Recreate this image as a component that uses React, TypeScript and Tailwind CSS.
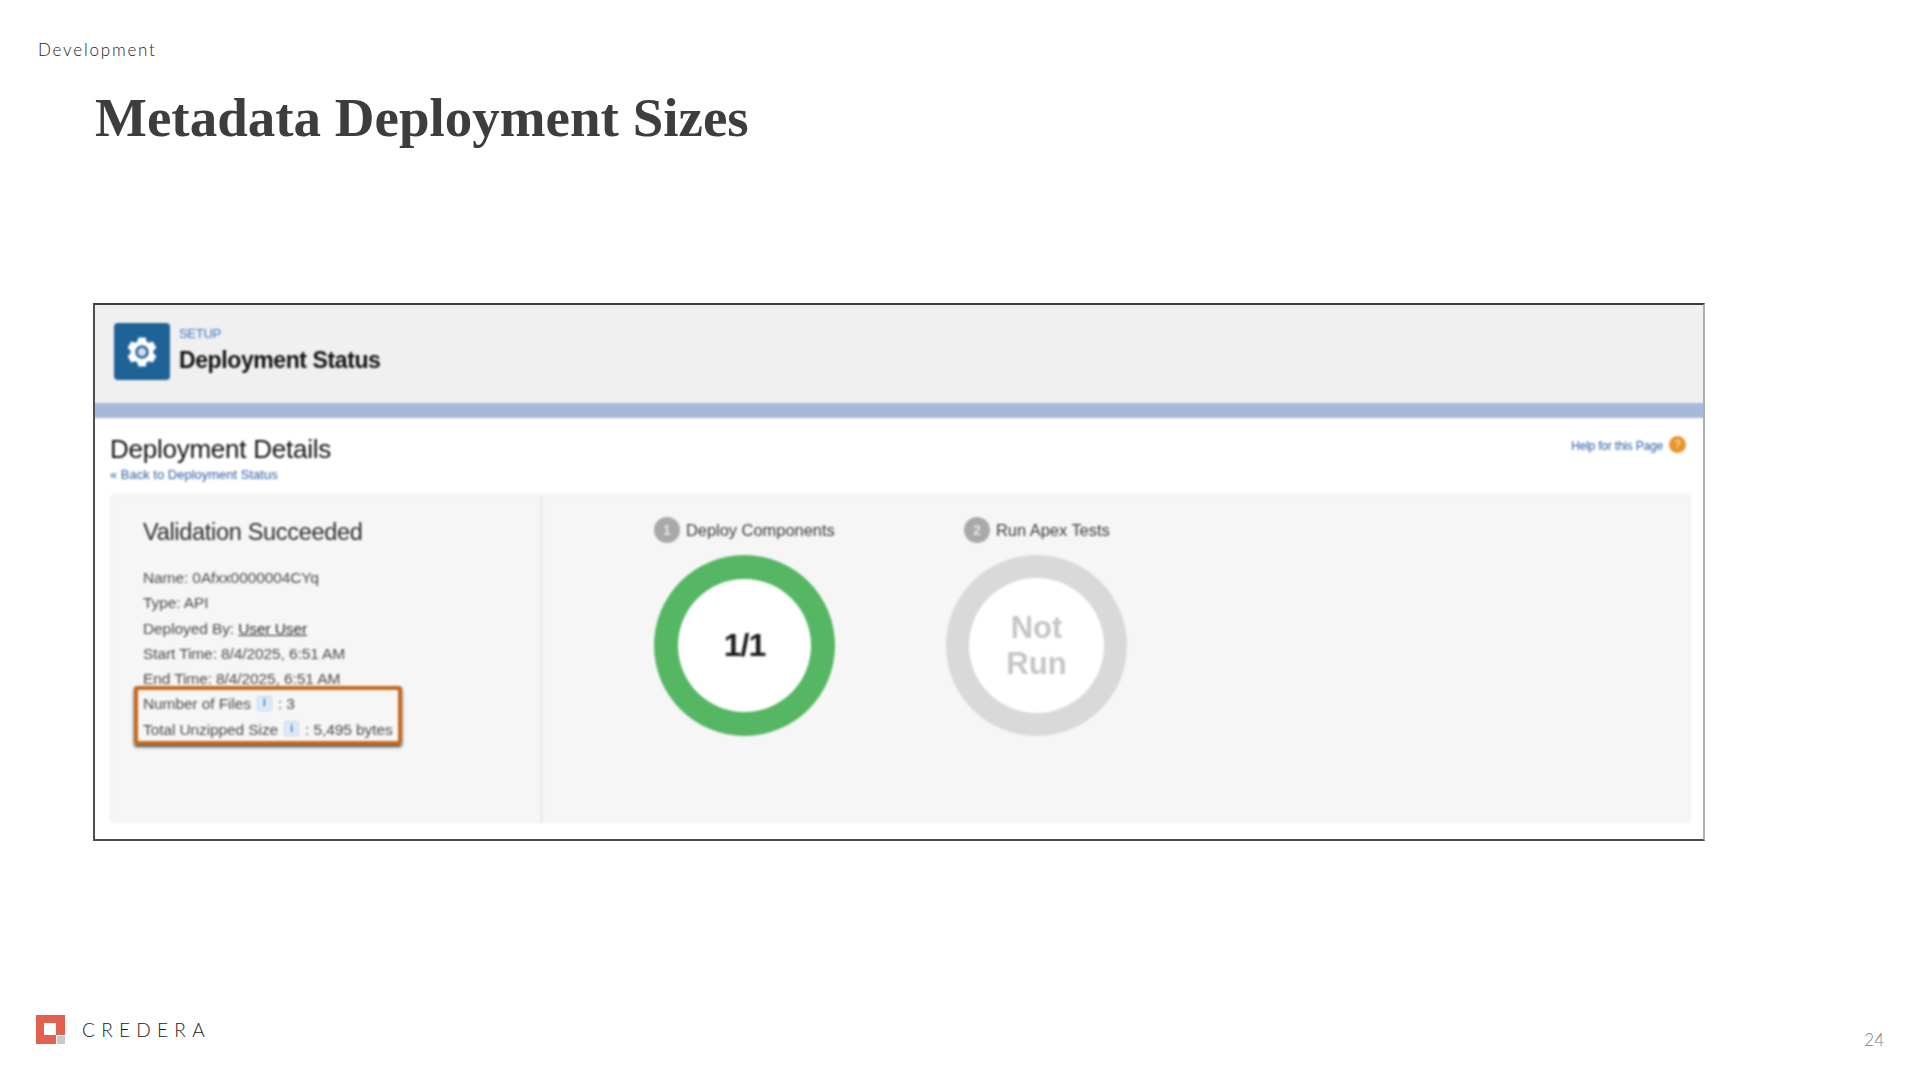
import React from 'react';

const details = ['Name: 0Afxx0000004CYq', 'Type: API'];
const times = ['Start Time: 8/4/2025, 6:51 AM', 'End Time: 8/4/2025, 6:51 AM'];

// six toothed gear, teeth at top and bottom
const gearPoints = Array.from({ length: 6 })
  .flatMap((_, i) => {
    const a = (i * Math.PI) / 3 - Math.PI / 2;
    return [
      [a - 0.42, 11.5],
      [a - 0.24, 15],
      [a + 0.24, 15],
      [a + 0.42, 11.5],
    ];
  })
  .map(([a, r]) => `${(16 + r * Math.cos(a)).toFixed(1)},${(16 + r * Math.sin(a)).toFixed(1)}`)
  .join(' ');

const InfoChip = () => (
  <span className="inline-flex items-center justify-center w-[15px] h-[15px] mx-[6px] align-[3px] rounded-[2px] bg-[#dfeaf8] border border-[#c5d6ec] text-[#2f6fc4] text-[10px] font-bold leading-none">
    i
  </span>
);

const StepLabel = ({ n, label }: { n: number; label: string }) => (
  <div className="flex items-center gap-[6px] h-[26px]">
    <span className="flex items-center justify-center w-[26px] h-[26px] rounded-full bg-[#a9a9a9] text-[#e4e4e4] text-[14px] font-bold">{n}</span>
    <span className="text-[16.5px] text-[#3c3c3c] tracking-[-0.05px]">{label}</span>
  </div>
);

const App: React.FC = () => {
  return (
    <div className="w-[1920px] h-[1080px] bg-white flex flex-col overflow-hidden font-['Liberation_Sans',sans-serif]">
      <div className="pl-[38px] pt-[39px] font-['Lato',sans-serif] font-light text-[17px] leading-[22px] tracking-[1.8px] text-[#1c1c1c]">Development</div>
      <h1 className="pl-[95px] mt-[27px] font-['Liberation_Serif',serif] font-bold text-[55px] leading-[60px] text-[#3d3d3d]">Metadata Deployment Sizes</h1>

      {/* screenshot inside the slide */}
      <div className="ml-[93px] mt-[155px] w-[1612px] h-[538px] shrink-0 border-[2px] border-t-[#3a3f45] border-l-[#4a5058] border-b-[#4a4a4a] border-r-[#aeaeae] bg-white overflow-hidden">
        <div className="-mx-[2px] -mt-[2px] h-[538px] flex flex-col blur-[0.8px]">
          <div className="h-[100px] shrink-0 bg-[#f0f0f0] flex items-start pl-[21px] pt-[20px] gap-[9px]">
            <div className="w-[56px] h-[57px] rounded-[4px] bg-[#1f6396] flex items-center justify-center">
              <svg width="32" height="32" viewBox="0 0 32 32">
                <polygon fill="#fff" points={gearPoints} />
                <circle cx="16" cy="16" r="5.5" fill="#cfdde9" stroke="#1f6396" strokeWidth="2.5" />
              </svg>
            </div>
            <div className="flex flex-col pt-[3px]">
              <span className="text-[13px] leading-[16px] text-[#3f78c2] tracking-[-0.3px]">SETUP</span>
              <span className="mt-[4px] text-[23px] leading-[29px] font-bold text-[#111] tracking-[-0.4px]">Deployment Status</span>
            </div>
          </div>
          <div className="h-[15px] shrink-0 bg-[#a5badb]"></div>

          <div className="flex-1 flex flex-col pl-[17px] pr-[14px] pt-[15px] pb-[18px]">
            <div className="flex justify-between items-start">
              <div>
                <div className="text-[26px] leading-[32px] text-[#111] tracking-[-0.25px]">Deployment Details</div>
                <div className="text-[13px] leading-[14px] mt-[3px] text-[#2a5ea6]">« Back to Deployment Status</div>
              </div>
              <div className="flex items-center gap-[6px] mr-[5px] mt-[1px]">
                <span className="text-[12px] text-[#2a5ea6] tracking-[-0.2px] mt-[3px]">Help for this Page</span>
                <span className="flex items-center justify-center w-[17px] h-[17px] rounded-full bg-[#e8952c] text-[#f7d9a8] text-[11px] font-bold">?</span>
              </div>
            </div>

            <div className="flex-1 mt-[12px] flex bg-[#f6f6f6] rounded-[4px] border border-[#efefef]">
              <div className="w-[432px] shrink-0 border-r-[3px] border-[#ececec] pl-[32px] pt-[22px]">
                <div className="text-[23.5px] leading-[30px] text-[#2c2c2c] tracking-[-0.3px]">Validation Succeeded</div>
                <div className="mt-[18px] text-[15.5px] leading-[25.3px] text-[#4c4c4c] tracking-[-0.1px]">
                  {details.map((d) => (
                    <div key={d}>{d}</div>
                  ))}
                  <div>
                    Deployed By: <span className="underline text-[#2c2c2c]">User User</span>
                  </div>
                  {times.map((t) => (
                    <div key={t}>{t}</div>
                  ))}
                  <div className="relative">
                    <div>
                      Number of Files
                      <InfoChip />: 3
                    </div>
                    <div className="whitespace-nowrap">
                      Total Unzipped Size
                      <InfoChip />: 5,495 bytes
                    </div>
                    <div className="absolute left-[-9px] top-[-5px] w-[268px] h-[59px] border-[4px] border-[#c8691c] rounded-[3px] shadow-[0_2px_3px_#444]"></div>
                  </div>
                </div>
              </div>

              <div className="flex-1 flex pl-[111px] pt-[22px]">
                <div className="flex flex-col w-[292px] shrink-0">
                  <StepLabel n={1} label="Deploy Components" />
                  <div className="mt-[12px] w-[181px] h-[181px] rounded-full bg-[#55b763] flex items-center justify-center">
                    <div className="w-[133px] h-[133px] rounded-full bg-white flex items-center justify-center pb-[2px] text-[32px] font-bold text-[#1c1c1c] tracking-[-1px]">1/1</div>
                  </div>
                </div>
                <div className="flex flex-col">
                  <div className="pl-[18px]">
                    <StepLabel n={2} label="Run Apex Tests" />
                  </div>
                  <div className="mt-[12px] w-[181px] h-[181px] rounded-full bg-[#d9d9d9] flex items-center justify-center">
                    <div className="w-[135px] h-[135px] rounded-full bg-white flex items-center justify-center text-center text-[31px] leading-[36px] font-bold text-[#c6c6c6]">
                      Not
                      <br />
                      Run
                    </div>
                  </div>
                </div>
              </div>
            </div>
          </div>
        </div>
      </div>

      <div className="flex-1 flex items-end justify-between pl-[36px] pr-[36px] pb-[30px]">
        <div className="flex items-center gap-[17px] mb-[6px]">
          <svg width="29" height="29" viewBox="0 0 29 29">
            <path fill="#e2604e" fillRule="evenodd" d="M0 0h29v20h-9v9H0zM8 8v12h12V8z" />
            <rect x="21" y="21" width="8" height="8" fill="#c9c9c9" />
          </svg>
          <span className="font-['Lato',sans-serif] font-light text-[19px] leading-[24px] tracking-[6.3px] text-[#222]">CREDERA</span>
        </div>
        <span className="font-['Lato',sans-serif] font-light text-[17px] leading-[20px] text-[#808080]">24</span>
      </div>
    </div>
  );
};

export default App;
